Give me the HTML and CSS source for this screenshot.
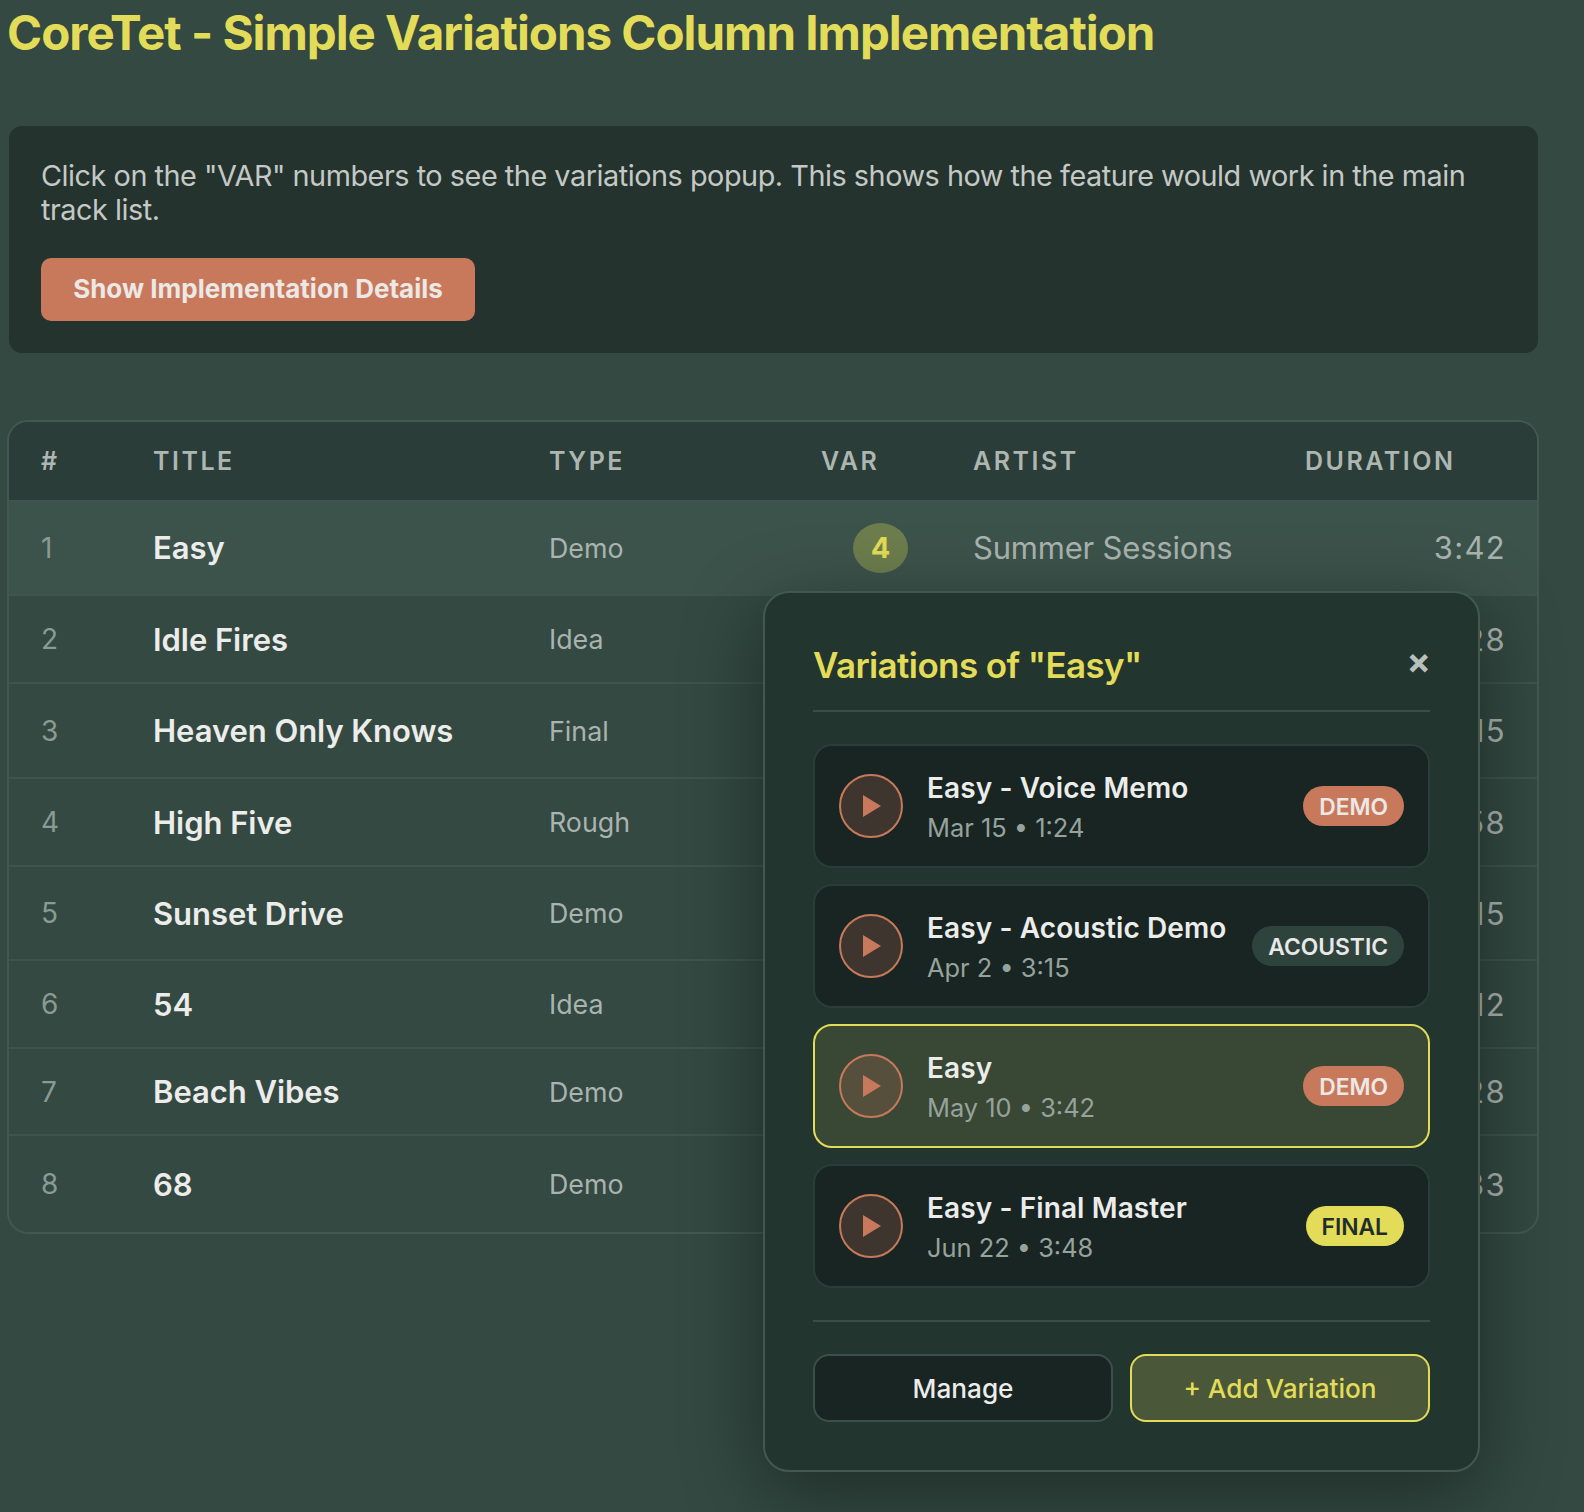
FILE: index.html
```html
<!DOCTYPE html>
<html lang="en">
<head>
<meta charset="utf-8">
<title>CoreTet - Simple Variations Column Implementation</title>
<link rel="stylesheet" href="styles.css">
</head>
<body>
<h1 class="page-title">CoreTet - Simple Variations Column Implementation</h1>
<section class="intro">
  <p class="intro-text">Click on the "VAR" numbers to see the variations popup. This shows how the feature would work in the main track list.</p>
  <button class="details-btn">Show Implementation Details</button>
</section>
<div class="table-wrap">
  <table class="tracks">
    <thead>
      <tr><th class="c-num">#</th><th class="c-title">TITLE</th><th class="c-type">TYPE</th><th class="c-var">VAR</th><th class="c-artist">ARTIST</th><th class="c-dur">DURATION</th></tr>
    </thead>
    <tbody>
      <tr class="active h-94"><td class="c-num">1</td><td class="c-title">Easy</td><td class="c-type">Demo</td><td class="c-var"><span class="var-badge">4</span></td><td class="c-artist">Summer Sessions</td><td class="c-dur">3:42</td></tr>
      <tr class="h-88"><td class="c-num">2</td><td class="c-title">Idle Fires</td><td class="c-type">Idea</td><td class="c-var"></td><td class="c-artist"></td><td class="c-dur">4:28</td></tr>
      <tr class="h-95"><td class="c-num">3</td><td class="c-title">Heaven Only Knows</td><td class="c-type">Final</td><td class="c-var"></td><td class="c-artist"></td><td class="c-dur">3:15</td></tr>
      <tr class="h-88"><td class="c-num">4</td><td class="c-title">High Five</td><td class="c-type">Rough</td><td class="c-var"></td><td class="c-artist"></td><td class="c-dur">2:58</td></tr>
      <tr class="h-94"><td class="c-num">5</td><td class="c-title">Sunset Drive</td><td class="c-type">Demo</td><td class="c-var"></td><td class="c-artist"></td><td class="c-dur">4:15</td></tr>
      <tr class="h-88"><td class="c-num">6</td><td class="c-title">54</td><td class="c-type">Idea</td><td class="c-var"></td><td class="c-artist"></td><td class="c-dur">3:12</td></tr>
      <tr class="h-87"><td class="c-num">7</td><td class="c-title">Beach Vibes</td><td class="c-type">Demo</td><td class="c-var"></td><td class="c-artist"></td><td class="c-dur">3:28</td></tr>
      <tr class="h-97"><td class="c-num">8</td><td class="c-title">68</td><td class="c-type">Demo</td><td class="c-var"></td><td class="c-artist"></td><td class="c-dur">4:33</td></tr>
    </tbody>
  </table>
</div>
<aside class="popup">
  <header class="popup-head">
    <h2 class="popup-title">Variations of "Easy"</h2>
    <span class="popup-close">×</span>
  </header>
  <div class="var-list">
    <div class="var-card">
      <span class="play"><svg class="play-icon" viewBox="0 0 20 24"><path d="M1 1 L19 12 L1 23 Z"/></svg></span>
      <div class="var-info"><div class="var-name">Easy - Voice Memo</div><div class="var-meta">Mar 15 • 1:24</div></div>
      <span class="tag tag-demo">DEMO</span>
    </div>
    <div class="var-card">
      <span class="play"><svg class="play-icon" viewBox="0 0 20 24"><path d="M1 1 L19 12 L1 23 Z"/></svg></span>
      <div class="var-info"><div class="var-name">Easy - Acoustic Demo</div><div class="var-meta">Apr 2 • 3:15</div></div>
      <span class="tag tag-acoustic">ACOUSTIC</span>
    </div>
    <div class="var-card current">
      <span class="play"><svg class="play-icon" viewBox="0 0 20 24"><path d="M1 1 L19 12 L1 23 Z"/></svg></span>
      <div class="var-info"><div class="var-name">Easy</div><div class="var-meta">May 10 • 3:42</div></div>
      <span class="tag tag-demo">DEMO</span>
    </div>
    <div class="var-card">
      <span class="play"><svg class="play-icon" viewBox="0 0 20 24"><path d="M1 1 L19 12 L1 23 Z"/></svg></span>
      <div class="var-info"><div class="var-name">Easy - Final Master</div><div class="var-meta">Jun 22 • 3:48</div></div>
      <span class="tag tag-final">FINAL</span>
    </div>
  </div>
  <footer class="popup-foot">
    <button class="foot-btn btn-manage">Manage</button>
    <button class="foot-btn btn-add">+ Add Variation</button>
  </footer>
</aside>
</body>
</html>
```

FILE: styles.css
```css
* { box-sizing: border-box; }
html, body { height: 100%; }
body {
  margin: 0;
  padding: 0 45px 0 7px;
  background: #334942;
  font-family: Inter, "Liberation Sans", sans-serif;
  color: #e8e8e8;
  overflow: hidden;
  position: relative;
}
.page-title {
  margin: 0;
  padding-top: 5px;
  height: 126px;
  font-size: 47.5px;
  line-height: 56px;
  font-weight: 700;
  letter-spacing: -1px;
  color: #e3dc58;
  white-space: nowrap;
}
.intro {
  margin: 0 1px 0 2px;
  height: 227px;
  padding: 33px 32px;
  background: #24332e;
  border-radius: 13px;
}
.intro-text {
  margin: 0 0 31px;
  font-size: 28.8px;
  line-height: 34px;
  letter-spacing: -0.46px;
  color: #c4c9c6;
}
.details-btn {
  display: block;
  width: 434px;
  height: 63px;
  padding: 0 0 2px;
  border: 0;
  border-radius: 10px;
  background: #c8795c;
  color: #ece8e6;
  font: 700 26px Inter, "Liberation Sans", sans-serif;
  letter-spacing: 0;
}
.table-wrap {
  margin-top: 67px;
  border: 2px solid #43594f;
  border-radius: 21px;
  overflow: hidden;
}
.tracks {
  width: 100%;
  border-collapse: collapse;
  table-layout: fixed;
}
.tracks th {
  height: 79px;
  padding: 0;
  background: #2a3d38;
  text-align: left;
  font-size: 25px;
  font-weight: 600;
  letter-spacing: 2.5px;
  color: #aeb6b2;
}
.tracks td { padding: 0; border-top: 2px solid #3e544c; }
.tracks tr.h-87 { height: 87px; }
.tracks tr.h-88 { height: 88px; }
.tracks tr.h-94 { height: 94px; }
.tracks tr.h-95 { height: 95px; }
.tracks tr.h-97 { height: 97px; }
.tracks tr.active td { padding: 0 0 1px; background: #3c534b; }
.c-num { width: 144px; padding-left: 32px !important; }
.c-title { width: 396px; }
.c-type { width: 272px; }
.c-var { width: 152px; }
.c-artist { width: 332px; }
td.c-dur { padding-right: 31px !important; }
td.c-num { font-size: 28px; color: #8a9a94; }
td.c-title { font-size: 31px; font-weight: 600; letter-spacing: -0.05px; color: #ececea; }
td.c-type { font-size: 26.8px; color: #aab3af; }
td.c-artist { font-size: 31px; letter-spacing: -0.2px; color: #aab3af; }
td.c-dur { font-size: 31px; letter-spacing: 1.3px; color: #aab3af; text-align: right; }
.var-badge {
  display: block;
  width: 55px;
  height: 50px;
  margin-left: 32px;
  border-radius: 50%;
  background: #6d7d4d;
  color: #e3dc58;
  font-size: 29px;
  font-weight: 700;
  line-height: 50px;
  text-align: center;
}
.popup {
  position: absolute;
  left: 763px;
  top: 591px;
  width: 717px;
  height: 881px;
  padding: 50px 48px 0;
  background: #23352f;
  border: 2px solid #43594f;
  border-radius: 26px;
  box-shadow: 0 20px 80px rgba(0, 0, 0, 0.42);
}
.popup-head {
  display: flex;
  justify-content: space-between;
  align-items: flex-start;
  height: 69px;
  border-bottom: 2px solid #3a4e47;
}
.popup-title {
  margin: -1px 0 0;
  font-size: 35px;
  line-height: 46px;
  font-weight: 600;
  letter-spacing: -0.6px;
  color: #e3dc58;
}
.popup-close {
  margin-right: -1px;
  margin-top: -2px;
  font-size: 36px;
  line-height: 40px;
  font-weight: 700;
  color: #b8c0bc;
}
.var-list {
  display: flex;
  flex-direction: column;
  gap: 16px;
  margin-top: 32px;
}
.var-card {
  display: flex;
  align-items: center;
  height: 124px;
  padding: 0 24px;
  background: #182522;
  border: 2px solid #2a3d38;
  border-radius: 19px;
}
.var-card.current {
  background: #384834;
  border-color: #e3dc58;
}
.play {
  flex: none;
  display: flex;
  align-items: center;
  justify-content: center;
  width: 64px;
  height: 64px;
  margin-right: 24px;
  border: 2px solid #c8795c;
  border-radius: 50%;
  background: #3e352e;
}
.current .play { background: #554f3b; }
.play-icon { width: 20px; height: 24px; margin-left: 2px; fill: #c8795c; }
.var-info { flex: 1; min-width: 0; padding-top: 2px; }
.var-name {
  font-size: 28px;
  line-height: 36px;
  font-weight: 600;
  letter-spacing: 0.1px;
  color: #ececea;
  white-space: nowrap;
}
.var-meta {
  margin-top: 6px;
  font-size: 25.4px;
  line-height: 32px;
  color: #97a29d;
  white-space: nowrap;
}
.tag {
  flex: none;
  height: 40px;
  padding: 0 16px;
  border-radius: 20px;
  font-size: 22.8px;
  font-weight: 600;
  line-height: 42px;
}
.tag-demo { background: #c8795c; color: #ece8e6; }
.tag-acoustic { background: #2f433d; color: #e8e8e8; }
.tag-final { background: #e3dc58; color: #1f2e2a; }
.popup-foot {
  display: flex;
  gap: 17px;
  margin-top: 32px;
  padding-top: 32px;
  border-top: 2px solid #3a4e47;
}
.foot-btn {
  flex: 1;
  height: 68px;
  padding: 0;
  border-radius: 16px;
  font: 500 26.2px Inter, "Liberation Sans", sans-serif;
}
.btn-manage { background: #182522; border: 2px solid #3c4f49; color: #ececea; }
.btn-add { background: #4a5839; border: 2px solid #e3dc58; color: #e3dc58; }
```
